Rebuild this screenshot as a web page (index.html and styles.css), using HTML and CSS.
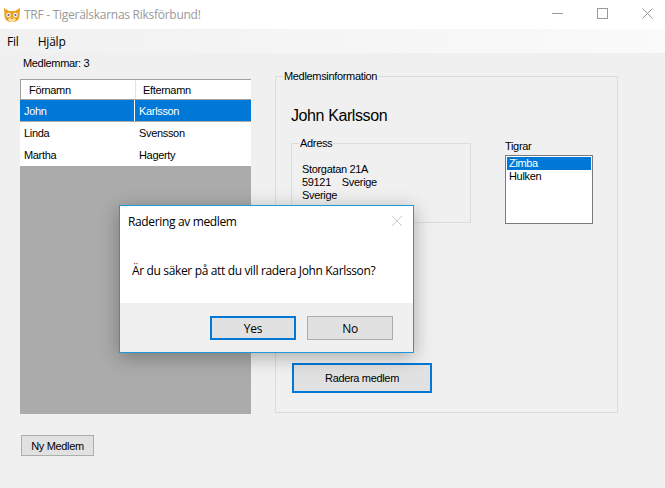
FILE: index.html
```html
<!DOCTYPE html>
<html lang="sv">
<head>
  <meta charset="UTF-8" />
  <title>TRF - Tigerälskarnas Riksförbund!</title>
  <link rel="stylesheet" href="styles.css">
</head>
<body>
  <div class="titlebar">
    <svg class="cat" width="18" height="16" viewBox="0 0 18 16">
      <path d="M1 1 L6 4 H12 L17 1 L16.5 9 Q16 15 9 15 Q2 15 1.500 9 Z" fill="#f0a020"/>
      <path d="M5 12 Q9 9 13 12 Q12 15 9 15 Q6 15 5 12 Z" fill="#fbe3a0"/>
      <circle cx="5.500" cy="8" r="2.200" fill="#fff"/>
      <circle cx="12.500" cy="8" r="2.200" fill="#fff"/>
      <circle cx="5.500" cy="8" r="1.100" fill="#5a5a8a"/>
      <circle cx="12.500" cy="8" r="1.100" fill="#5a5a8a"/>
      <path d="M8 11 H10 L9 12.500 Z" fill="#c8501a"/>
    </svg>
    <span class="title">TRF - Tigerälskarnas Riksförbund!</span>
    <div class="winbtns">
      <svg width="11" height="11" viewBox="0 0 11 11"><path d="M0 5.500 H11" stroke="#999" fill="none"/></svg>
      <svg width="11" height="11" viewBox="0 0 11 11"><rect x="0.500" y="0.500" width="10" height="10" stroke="#999" fill="none"/></svg>
      <svg width="11" height="11" viewBox="0 0 11 11"><path d="M0.500 0.500 L10.500 10.500 M10.500 0.500 L0.500 10.500" stroke="#999" fill="none"/></svg>
    </div>
  </div>

  <div class="menubar">
    <span class="menu-fil">Fil</span>
    <span>Hjälp</span>
  </div>

  <div class="content">
    <div class="left">
      <div class="count">Medlemmar: 3</div>
      <div class="list">
        <div class="list-head">
          <div class="col1">Förnamn</div>
          <div class="col2">Efternamn</div>
        </div>
        <div class="row selected">
          <div class="cell1">John</div>
          <div class="cell2">Karlsson</div>
        </div>
        <div class="row">
          <div class="cell1">Linda</div>
          <div class="cell2">Svensson</div>
        </div>
        <div class="row">
          <div class="cell1">Martha</div>
          <div class="cell2">Hagerty</div>
        </div>
      </div>
      <button class="btn btn-new">Ny Medlem</button>
    </div>

    <fieldset class="group">
      <legend>Medlemsinformation</legend>
      <div class="name">John Karlsson</div>
      <div class="details">
        <fieldset class="address">
          <legend>Adress</legend>
          <div>Storgatan 21A</div>
          <div>59121 &nbsp;&nbsp; Sverige</div>
          <div>Sverige</div>
        </fieldset>
        <div class="tigers">
          <div class="tigers-label">Tigrar</div>
          <div class="listbox">
            <div class="item selected">Zimba</div>
            <div class="item">Hulken</div>
          </div>
        </div>
      </div>
      <button class="btn btn-delete">Radera medlem</button>
    </fieldset>
  </div>

  <div class="dialog">
    <div class="dialog-top">
      <div class="dialog-title">
        <span>Radering av medlem</span>
        <svg width="12" height="12" viewBox="0 0 12 12"><path d="M1 1 L11 11 M11 1 L1 11" stroke="#ccc" fill="none"/></svg>
      </div>
      <div class="dialog-msg">Är du säker på att du vill radera John Karlsson?</div>
    </div>
    <div class="dialog-bottom">
      <button class="btn dialog-btn default">Yes</button>
      <button class="btn dialog-btn">No</button>
    </div>
  </div>
</body>
</html>
```

FILE: styles.css
```css
* {
  box-sizing: border-box;
}
body {
  margin: 0;
  width: 665px;
  height: 488px;
  overflow: hidden;
  position: relative;
  background: #f0f0f0;
  color: #000;
  font-family: "Liberation Sans", sans-serif;
  font-size: 11px;
  letter-spacing: -0.33px;
}
fieldset {
  margin: 0;
  padding: 0;
  min-width: 0;
  border: 1px solid #dcdcdc;
}
legend {
  padding: 0 1px;
  line-height: 13px;
}

/* window chrome */
.titlebar {
  height: 29px;
  background: #fff;
  display: flex;
  align-items: center;
  padding-left: 3px;
  font-family: "Open Sans", sans-serif;
  font-size: 12px;
  letter-spacing: -0.27px;
}
.cat {
  margin-right: 3px;
}
.title {
  color: #999;
}
.winbtns {
  margin-left: auto;
  display: flex;
  gap: 34px;
  padding-right: 12px;
  padding-bottom: 3px;
}
.menubar {
  height: 24px;
  background: linear-gradient(to right, #f1f1f1, #fafafa);
  display: flex;
  align-items: center;
  padding-left: 7px;
  font-family: "Open Sans", sans-serif;
  font-size: 12px;
  letter-spacing: -0.2px;
}
.menu-fil {
  margin-right: 19px;
}

/* main form */
.content {
  display: flex;
  padding: 4px 0 0 20px;
}
.left {
  width: 231px;
  margin-right: 24px;
}
.count {
  padding-left: 3px;
  line-height: 13px;
  margin-bottom: 9px;
}
.list {
  height: 335px;
  background: #ababab;
}
.list-head {
  display: flex;
  height: 21px;
  background: #fff;
  border: 1px solid #a0a0a0;
  border-width: 1px 0 1px 1px;
  line-height: 20px;
}
.col1 {
  width: 115px;
  padding-left: 8px;
  border-right: 1px solid #e5e5e5;
}
.col2 {
  padding-left: 7px;
}
.row {
  display: flex;
  height: 22px;
  line-height: 22px;
  background: #fff;
}
.row.selected {
  height: 21px;
  line-height: 23px;
  margin-bottom: 1px;
  background: #0078d7;
  color: #fff;
}
.cell1 {
  width: 115px;
  padding-left: 4px;
}
.row.selected .cell1 {
  border-right: 1px solid #fff;
}
.cell2 {
  padding-left: 4px;
}
.btn {
  font-family: "Liberation Sans", sans-serif;
  font-size: 11px;
  letter-spacing: -0.33px;
  color: #000;
  background: #e1e1e1;
  border: 1px solid #adadad;
  padding: 0;
}
.btn-new {
  display: block;
  width: 73px;
  height: 21px;
  margin: 21px 0 0 1px;
}

.group {
  width: 343px;
  height: 343px;
  margin-top: 13px;
  padding-left: 15px;
}
.group > legend {
  margin-left: -8px;
}
.name {
  font-size: 16px;
  letter-spacing: -0.4px;
  line-height: 20px;
  margin-top: 23px;
  margin-bottom: 11px;
}
.details {
  display: flex;
  align-items: flex-start;
}
.address {
  width: 180px;
  height: 86px;
  padding: 13px 0 0 10px;
  line-height: 13px;
  margin-right: 34px;
}
.address legend {
  margin-left: -3px;
}
.tigers {
  margin-top: 3px;
}
.tigers-label {
  line-height: 13px;
  margin-bottom: 2px;
}
.listbox {
  width: 88px;
  height: 69px;
  background: #fff;
  border: 1px solid #7a7a7a;
  padding: 1px;
}
.item {
  height: 13px;
  line-height: 13px;
  padding-left: 2px;
}
.item.selected {
  background: #0078d7;
  color: #fff;
}
.btn-delete {
  display: block;
  width: 140px;
  height: 30px;
  margin: 139px 0 0 1px;
  border: 2px solid #0078d7;
}

/* message box on top of the form */
.dialog {
  position: absolute;
  left: 119px;
  top: 205px;
  width: 295px;
  height: 148px;
  background: #f0f0f0;
  border: 1px solid #1a9ad7;
  box-shadow: 0 4px 18px rgba(0,0,0,0.3);
  font-family: "Open Sans", sans-serif;
  font-size: 12px;
  letter-spacing: -0.35px;
}
.dialog-top {
  height: 97px;
  background: #fff;
}
.dialog-title {
  display: flex;
  justify-content: space-between;
  align-items: center;
  height: 30px;
  padding: 0 10px 0 8px;
}
.dialog-msg {
  padding: 27px 0 0 12px;
  line-height: 16px;
}
.dialog-bottom {
  display: flex;
  gap: 11px;
  padding: 13px 0 0 90px;
}
.dialog-btn {
  width: 86px;
  height: 24px;
  font-family: "Open Sans", sans-serif;
  font-size: 12px;
  letter-spacing: -0.3px;
}
.dialog-btn.default {
  border: 2px solid #0078d7;
}
```
